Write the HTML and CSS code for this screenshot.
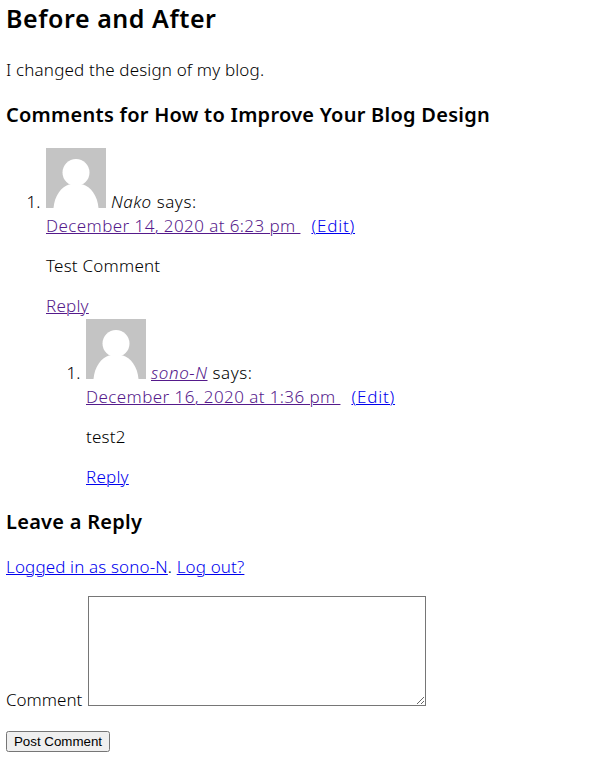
FILE: index.html
```html
<!DOCTYPE html>
<html lang="en">
<head>
<meta charset="utf-8">
<title>Before and After</title>
<link rel="stylesheet" href="styles.css">
</head>
<body>
<h1 class="title">Before and After</h1>
<p class="intro">I changed the design of my blog.</p>
<h2 class="comments-title">Comments for How to Improve Your Blog Design</h2>
<ol class="comments">
<li>
<div class="author"><svg class="avatar" viewBox="0 0 60 60"><rect width="60" height="60" fill="#c4c4c4"/><circle cx="30" cy="24.5" r="13.5" fill="#fff"/><path d="M7.5 60C8.5 48 15 39 23 36.5H37C45 39 51.5 48 52.5 60Z" fill="#fff"/></svg><i>Nako</i> says:</div>
<div class="meta"><a class="visited date" href="#">December 14, 2020 at 6:23 pm&nbsp;</a><a class="edit" href="#">(Edit)</a></div>
<p class="text">Test Comment</p>
<div class="reply"><a class="visited" href="#">Reply</a></div>
<ol class="children">
<li>
<div class="author"><svg class="avatar" viewBox="0 0 60 60"><rect width="60" height="60" fill="#c4c4c4"/><circle cx="30" cy="24.5" r="13.5" fill="#fff"/><path d="M7.5 60C8.5 48 15 39 23 36.5H37C45 39 51.5 48 52.5 60Z" fill="#fff"/></svg><a class="visited" href="#"><i>sono-N</i></a> says:</div>
<div class="meta"><a class="visited date" href="#">December 16, 2020 at 1:36 pm&nbsp;</a><a class="edit" href="#">(Edit)</a></div>
<p class="text">test2</p>
<div class="reply"><a href="#">Reply</a></div>
</li>
</ol>
</li>
</ol>
<h2 class="respond-title">Leave a Reply</h2>
<p class="login"><a href="#">Logged in as sono-N</a>. <a href="#">Log out?</a></p>
<form class="form">
<div class="field"><label for="c">Comment</label><textarea id="c"></textarea></div>
<button type="button" class="submit">Post Comment</button>
</form>
</body>
</html>
```

FILE: styles.css
```css
body{margin:0 6px;font:350 17px/24px "Noto Sans",sans-serif;color:#000;overflow:hidden}
h1,h2,p,ol{margin:0}
.title{font-size:25px;line-height:36px;font-weight:600;letter-spacing:.55px}
.intro{margin-top:22px;letter-spacing:.16px}
.comments-title,.respond-title{font-size:20px;line-height:30px;margin-top:18px;font-weight:600;letter-spacing:.26px}
ol{padding-left:40px}
li::marker{content:"1.\2004"}
.comments{margin-top:18px}
.children{padding-top:1px}
.author{height:66px;line-height:24px;letter-spacing:.56px}
.avatar{width:60px;height:60px;margin-right:5px}
a{color:#00e;text-decoration:underline;text-decoration-thickness:1px}
.visited{color:#551a8b}
.date{letter-spacing:.41px}
.edit{margin-left:11px;letter-spacing:.8px}
.text,.reply{margin-top:16px;letter-spacing:.22px}
.login{margin-top:18px;letter-spacing:.14px}
.field{display:flex;align-items:flex-end;margin-top:17px}
label{width:82px;margin-bottom:-6px}
textarea{width:338px;height:110px;box-sizing:border-box;margin:0;border:1px solid #767676}
.submit{margin-top:25px;font:13.333px "Liberation Sans",sans-serif;height:21px;width:104px;padding:0}
```
